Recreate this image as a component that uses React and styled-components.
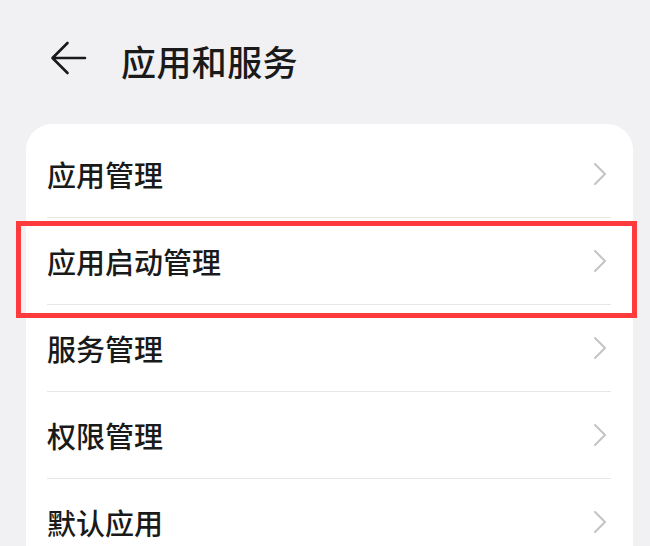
import React from "react";
import styled, { createGlobalStyle } from "styled-components";

const GlobalStyle = createGlobalStyle`
  html, body {
    margin: 0;
    padding: 0;
    background: #f1f1f3;
    overflow: hidden;
  }
  body {
    font-family: "Noto Sans CJK SC", "Noto Sans", sans-serif;
    color: #1a1a1a;
  }
`;

const Page = styled.div`
  width: 650px;
  height: 546px;
  overflow: hidden;
  background: #f1f1f3;
`;

const Header = styled.header`
  height: 118px;
  display: flex;
  align-items: center;
  gap: 34px;
  padding-left: 50px;
  padding-top: 2px;
  box-sizing: border-box;
`;

const BackButton = styled.button`
  display: flex;
  align-items: center;
  justify-content: center;
  width: 37px;
  height: 34px;
  padding: 0;
  margin-top: -4px;
  border: none;
  background: none;
  color: #1a1a1a;
`;

const Title = styled.h1`
  margin: 0;
  font-size: 35px;
  font-weight: 500;
  line-height: 1;
  letter-spacing: 0.4px;
`;

const Card = styled.ul`
  list-style: none;
  margin: 6px 17px 0 26px;
  padding: 7px 22px 0 21px;
  background: #ffffff;
  border-radius: 26px;
  min-height: 500px;
`;

const Row = styled.li`
  position: relative;
  height: 86px;
  display: flex;
  align-items: center;
  justify-content: space-between;
  border-bottom: 1px solid #e6e6e6;
`;

const Label = styled.span`
  font-size: 29px;
  font-weight: 500;
  line-height: 1;
`;

const Chevron = styled.svg`
  width: 14px;
  height: 24px;
  margin-right: 4px;
  color: #c4c4c4;
`;

const Highlight = styled.div`
  position: absolute;
  top: 3px;
  left: -31px;
  right: -26px;
  bottom: -14px;
  border: 5px solid #fd3a3c;
  pointer-events: none;
`;

const items = [
  { label: "应用管理" },
  { label: "应用启动管理", marked: true },
  { label: "服务管理" },
  { label: "权限管理" },
  { label: "默认应用" },
];

function BackArrow() {
  return (
    <svg width="37" height="34" viewBox="0 0 37 34" fill="none">
      <path
        d="M35 17H3M17.5 2L2.5 17L17.5 32"
        stroke="currentColor"
        strokeWidth="2.6"
        strokeLinecap="round"
        strokeLinejoin="round"
      />
    </svg>
  );
}

function ChevronRight() {
  return (
    <Chevron viewBox="0 0 14 24" fill="none">
      <path
        d="M2 2L12 12L2 22"
        stroke="currentColor"
        strokeWidth="2"
        strokeLinecap="round"
        strokeLinejoin="round"
      />
    </Chevron>
  );
}

export default function App() {
  return (
    <Page>
      <GlobalStyle />
      <Header>
        <BackButton aria-label="返回">
          <BackArrow />
        </BackButton>
        <Title>应用和服务</Title>
      </Header>
      <Card>
        {items.map((item) => (
          <Row key={item.label}>
            <Label>{item.label}</Label>
            <ChevronRight />
            {item.marked && <Highlight />}
          </Row>
        ))}
      </Card>
    </Page>
  );
}
